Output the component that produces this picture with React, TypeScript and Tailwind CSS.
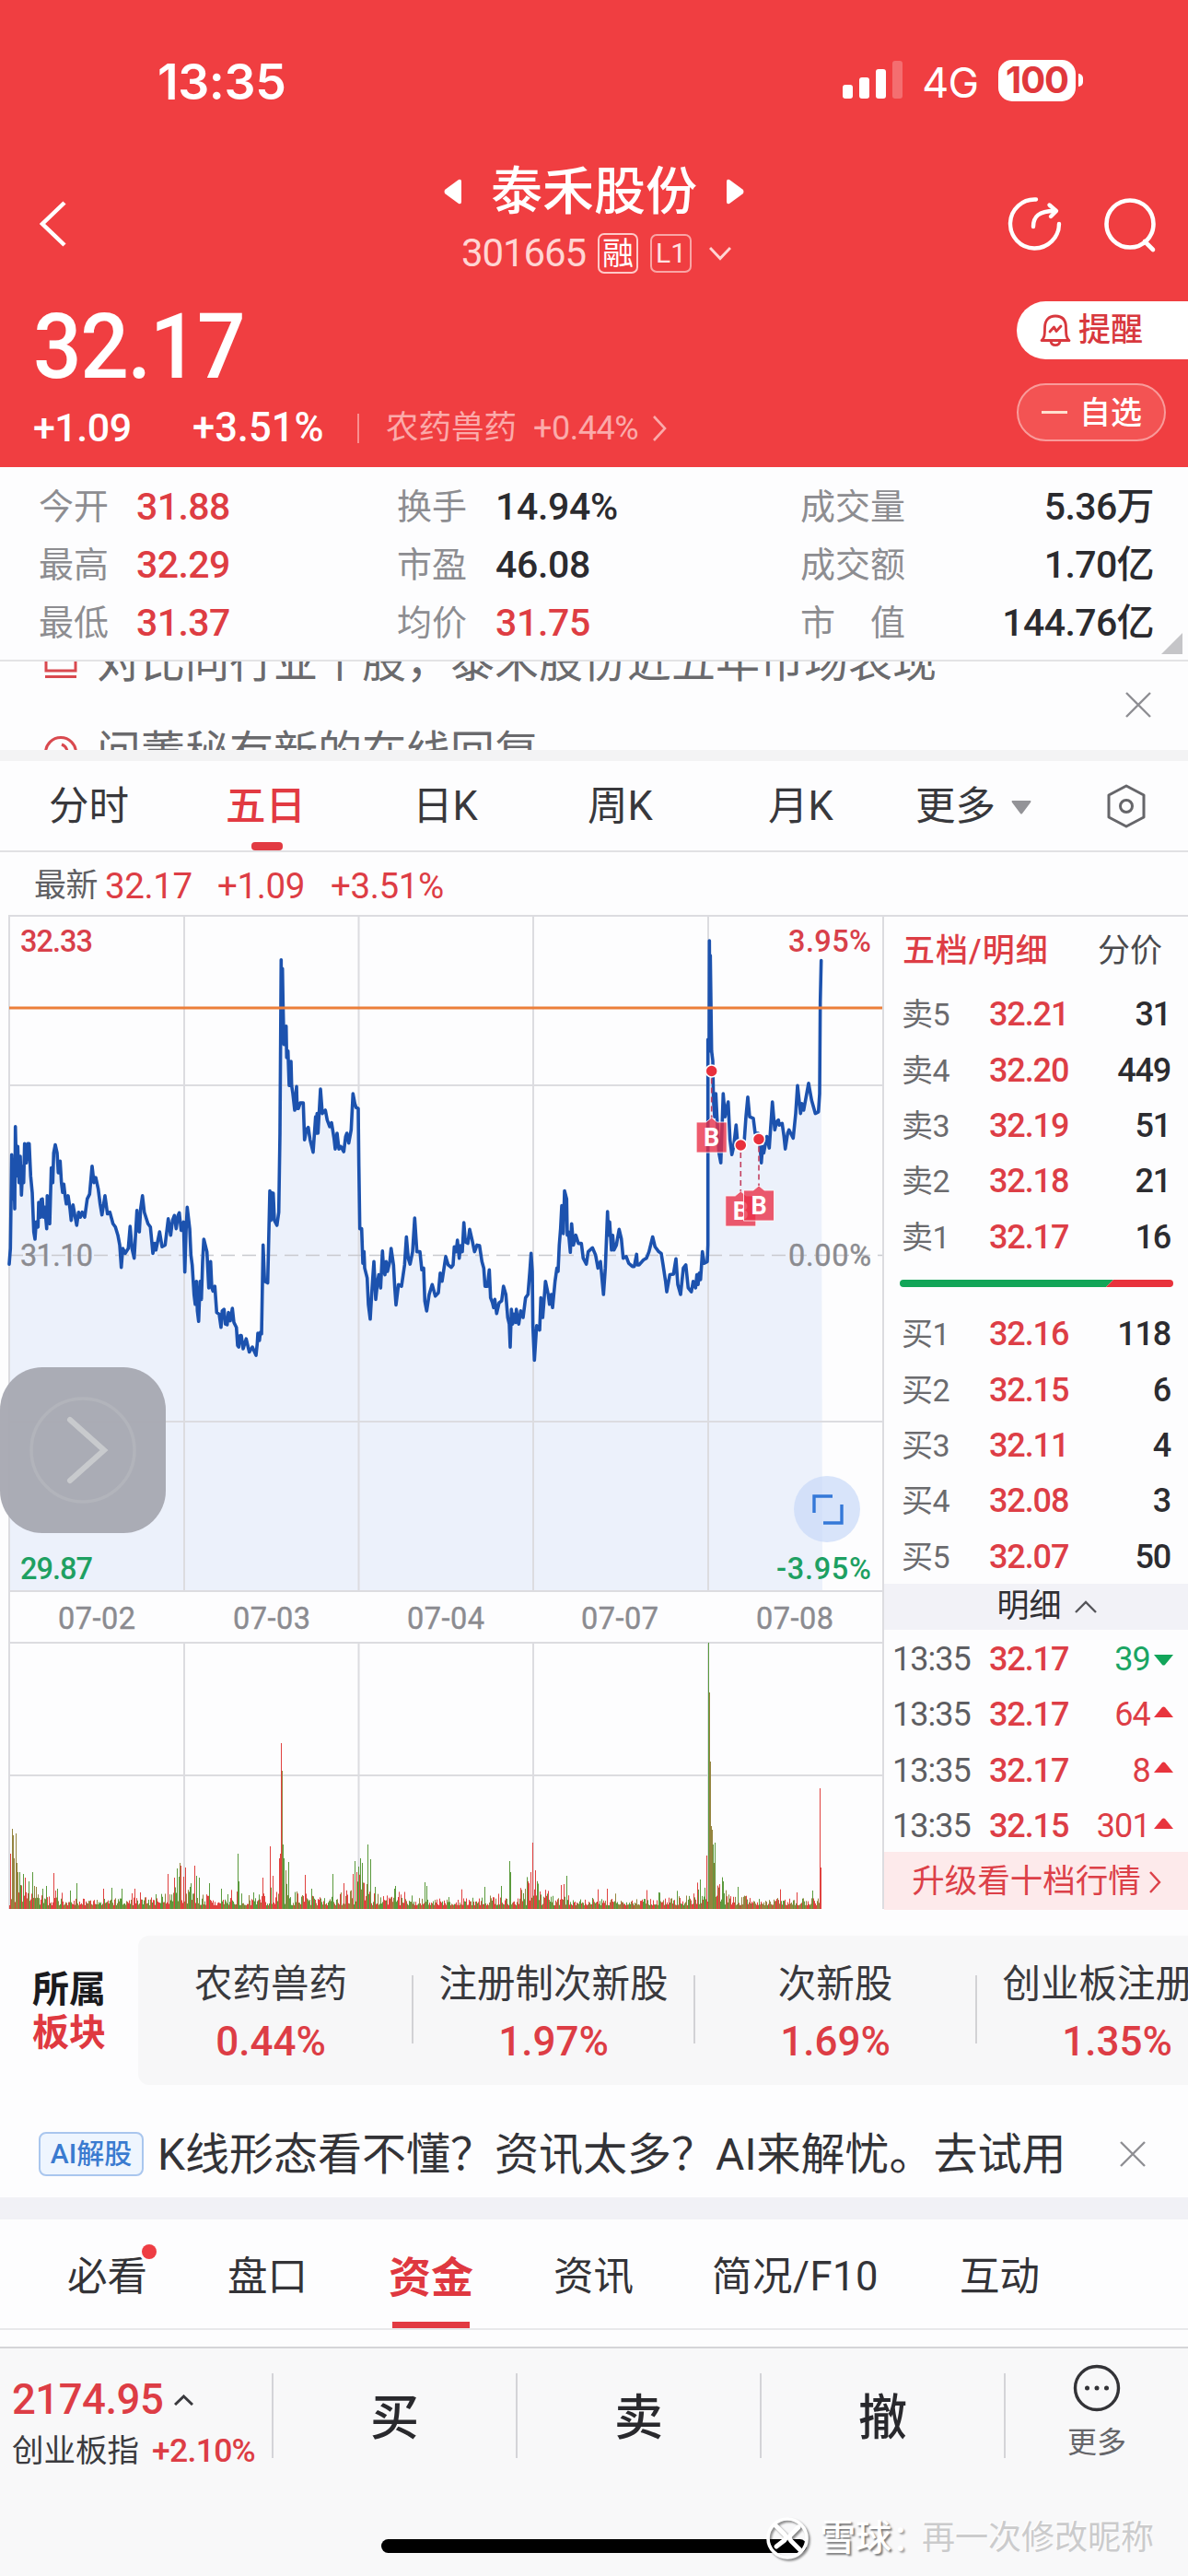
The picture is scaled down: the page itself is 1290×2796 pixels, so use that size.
import React from 'react';
import clsx from 'clsx';

const stats = [
  [
    { label: '今开', value: '31.88', up: true },
    { label: '最高', value: '32.29', up: true },
    { label: '最低', value: '31.37', up: true },
  ],
  [
    { label: '换手', value: '14.94%' },
    { label: '市盈', value: '46.08' },
    { label: '均价', value: '31.75', up: true },
  ],
  [
    { label: '成交量', value: '5.36万' },
    { label: '成交额', value: '1.70亿' },
    { label: '市　值', value: '144.76亿' },
  ],
];

const asks = [
  ['卖5', '32.21', '31'],
  ['卖4', '32.20', '449'],
  ['卖3', '32.19', '51'],
  ['卖2', '32.18', '21'],
  ['卖1', '32.17', '16'],
];

const bids = [
  ['买1', '32.16', '118'],
  ['买2', '32.15', '6'],
  ['买3', '32.11', '4'],
  ['买4', '32.08', '3'],
  ['买5', '32.07', '50'],
];

const trades = [
  { time: '13:35', price: '32.17', qty: '39', up: false },
  { time: '13:35', price: '32.17', qty: '64', up: true },
  { time: '13:35', price: '32.17', qty: '8', up: true },
  { time: '13:35', price: '32.15', qty: '301', up: true },
];

const sectors = [
  { name: '农药兽药', value: '0.44%' },
  { name: '注册制次新股', value: '1.97%' },
  { name: '次新股', value: '1.69%' },
  { name: '创业板注册制', value: '1.35%' },
];

// price trace, first half and second half of the five days; units are 1/3 px wide and 1/2.8 px high
const traceA =
  '30,1098 34,1050 38,765 42,900 45,780 48,930 50,680 54,830 58,740 62,850 66,770 70,888 74,800 77,850 80,732 86,790 90,732 95,732 100,830 105,880 110,1000 114,1022 118,970 124,985 126,910 132,955 134,902 138,900 142,955 146,925 152,990 154,890 158,970 162,975 167,805 172,850 175,760 180,735 186,760 190,820 196,785 200,850 204,880 208,855 212,890 216,915 222,890 228,930 232,965 238,918 244,950 250,980 256,940 262,955 268,940 276,955 284,900 292,885 300,800 306,850 312,835 320,870 326,915 332,948 342,890 350,945 358,940 368,975 376,985 384,1010 390,1040 395,1108 400,1050 408,1065 418,1050 424,983 430,1050 437,1080 446,935 450,995 454,1000 458,930 464,890 470,940 482,975 490,985 494,1025 498,1065 504,1035 508,1055 520,1000 528,1045 538,1040 548,960 556,1010 562,965 568,950 574,990 580,950 584,942 590,995 598,970 602,1122 606,1000 610,925 618,990 622,1070 626,1100 632,1190 636,1220 640,1150 643,1240 647,1272 652,1150 656,1205 660,1090 664,1022 674,1060 680,1170 686,1090 690,1170 694,1180 700,1165 706,1245 714,1250 720,1290 724,1240 730,1235 734,1280 740,1282 744,1245 750,1270 757,1232 762,1275 770,1290 774,1345 778,1350 782,1315 786,1315 792,1355 802,1325 812,1365 822,1350 834,1375 838,1340 840,1308 845,1330 848,1305 852,1310 855,1150 857,1040 862,1150 872,1155 879,875 882,965 884,880 887,960 890,882 894,965 902,980 908,940 912,700 916,173 917,400 920,200 922,300 925,430 932,375 934,470 938,450 942,555 948,482 950,555 954,580 960,630 966,558 968,625 972,625 978,608 988,608 992,720 998,690 1004,682 1010,720 1020,758 1028,650 1030,700 1033,640 1036,700 1044,566 1050,640 1060,630 1066,660 1074,680 1080,668 1088,715 1092,748 1098,700 1104,748 1110,740 1120,756 1126,710 1130,700 1136,730 1144,690 1150,580 1156,610 1160,622 1167,625 1169,800 1172,990 1178,990 1182,1095 1186,1060 1188,1110 1196,1140 1200,1220 1206,1265 1212,1170 1218,1090 1224,1205 1230,1150 1234,1130 1240,1170 1246,1058 1250,1120 1254,1130 1258,1090 1262,1120 1270,1090 1274,1050 1282,1100 1286,1170 1290,1222 1298,1160 1308,1165 1318,1100 1324,1015 1330,1080 1336,1098 1344,1060 1351,958 1358,1060 1368,1060 1374,1115 1380,1110 1384,1210 1390,1240 1398,1190 1408,1160 1418,1195 1428,1185 1434,1125 1440,1150';
const traceB =
  '12,1075 20,1100 30,1108 36,1100 40,1045 46,1060 50,1025 56,1080 60,1042 66,1060 71,972 76,1030 84,1035 90,992 98,1025 106,1060 114,1040 122,1042 130,1090 136,1110 140,1165 148,1165 154,1115 158,1200 164,1215 168,1230 172,1205 178,1248 186,1215 194,1210 200,1165 208,1190 214,1260 219,1280 222,1350 226,1235 230,1280 234,1250 240,1275 242,1235 246,1270 250,1280 256,1240 264,1260 272,1200 280,1190 286,1120 290,1065 294,1120 296,1290 301,1390 308,1285 318,1298 322,1200 328,1260 332,1210 337,1150 346,1190 350,1220 356,1190 360,1230 368,1150 374,1110 378,1120 382,1040 386,990 390,920 395,1005 399,875 406,900 408,1010 412,1000 418,1062 422,975 428,1040 436,1010 444,1035 454,1035 460,1080 470,1098 476,1060 490,1048 500,1070 508,1110 516,1090 526,1190 532,1110 539,938 542,1010 546,970 552,1055 556,1010 560,1055 568,1040 577,992 584,1020 590,1080 600,1075 608,1095 620,1105 626,1105 634,1068 636,1100 642,1100 656,1085 666,1080 674,1060 686,1015 694,1045 706,1060 714,1065 720,1100 728,1150 732,1182 742,1130 754,1128 762,1082 768,1160 777,1190 786,1110 794,1100 802,1170 812,1182 818,1150 826,1170 830,1130 834,1160 838,1125 842,1145 848,1060 854,1095 864,1090 866,1040 866,415 870,450 871,115 873,450 874,160 878,450 882,480 884,600 888,650 892,580 896,660 902,760 908,790 916,580 922,650 928,620 932,605 938,720 944,765 950,740 958,675 962,720 972,740 984,730 990,650 996,590 1002,650 1014,655 1020,700 1030,700 1036,740 1040,790 1044,740 1048,760 1058,710 1066,745 1076,605 1084,690 1090,665 1096,660 1098,675 1108,670 1114,710 1118,748 1126,700 1130,690 1144,715 1152,640 1158,555 1168,640 1172,610 1178,630 1194,548 1204,600 1216,640 1226,635 1230,580 1232,300 1235,175';

const trace = [
  ...traceA.split(' ').map((p) => p.split(',').map(Number)),
  ...traceB.split(' ').map((p) => p.split(',').map(Number)).map(([x, y]) => [x + 1440, y]),
].map(([x, y]) => [x / 3, y / 2.8 - 13]);

const line = 'M' + trace.map(([x, y]) => `${x.toFixed(1)} ${y.toFixed(1)}`).join('L');
const area = `${line}L893 734L10 734Z`;

const RED = '#e0413f';
const GREEN = '#5a9a3c';
const OLIVE = '#94843f';

const spikes: [number, number, string][] = [
  [11, 60, RED], [13, 87, OLIVE], [14, 80, OLIVE], [15, 55, OLIVE], [17, 82, OLIVE], [18, 50, OLIVE], [19, 40, OLIVE], [21, 40, GREEN], [25, 38, GREEN], [27, 34, RED], [31, 30, GREEN], [35, 40, GREEN],
  [37, 25, OLIVE], [39, 24, OLIVE], [46, 22, GREEN], [50, 25, GREEN], [58, 39, RED], [60, 20, RED], [62, 22, GREEN], [76, 20, GREEN], [83, 28, GREEN], [112, 22, RED], [121, 23, GREEN],
  [132, 22, GREEN], [146, 22, RED], [152, 18, RED], [169, 16, GREEN], [182, 38, RED], [189, 34, RED], [192, 44, GREEN], [195, 50, OLIVE], [196, 47, RED], [199, 35, RED], [201, 45, RED], [206, 24, GREEN],
  [211, 47, RED], [213, 36, GREEN], [216, 34, GREEN], [227, 28, GREEN], [240, 22, GREEN], [247, 16, GREEN], [258, 60, GREEN], [259, 30, GREEN], [275, 18, GREEN], [285, 34, RED], [293, 68, RED], [296, 36, RED],
  [303, 55, RED], [304, 60, RED], [305, 180, RED], [306, 150, OLIVE], [307, 70, GREEN], [308, 55, GREEN], [310, 42, OLIVE], [313, 51, GREEN],
  [331, 37, RED], [338, 22, GREEN], [361, 38, GREEN], [373, 28, RED], [383, 38, RED], [385, 52, GREEN], [387, 40, RED], [389, 46, GREEN], [391, 55, GREEN], [393, 50, GREEN], [399, 70, GREEN],
  [402, 54, GREEN], [407, 24, GREEN], [429, 25, GREEN], [461, 29, GREEN], [463, 25, GREEN], [526, 24, GREEN], [544, 25, GREEN], [553, 52, GREEN], [554, 40, GREEN], [573, 30, RED],
  [576, 40, RED], [578, 72, RED], [581, 42, RED], [609, 26, RED], [612, 27, RED], [615, 36, GREEN], [659, 22, RED], [715, 18, GREEN], [760, 32, GREEN],
  [767, 58, RED], [769, 289, GREEN], [770, 235, OLIVE], [771, 160, OLIVE], [772, 90, OLIVE], [773, 86, OLIVE], [774, 70, GREEN], [775, 50, OLIVE], [776, 72, GREEN], [785, 30, GREEN], [801, 24, GREEN],
  [865, 18, RED], [882, 20, GREEN], [890, 131, RED], [891, 45, RED],
];

// trading gets busier around each open and close
const busy = [14, 200, 307, 390, 578, 774];
let seed = 71;
const rand = () => {
  seed = (seed * 16807) % 2147483647;
  return seed / 2147483647;
};
const volumes: [number, number, string][] = [];
for (let x = 10; x < 892; x += 1) {
  const near = Math.min(...busy.map((b) => Math.abs(x - b)));
  const level = 8 + 30 * Math.exp(-near / 14);
  const h = 4 + level * Math.pow(rand(), 1.5) + (rand() > 0.93 ? 14 * rand() : 0);
  const r = rand();
  volumes.push([x, h, r > 0.58 ? RED : r > 0.3 ? GREEN : OLIVE]);
}

const Marker = ({ x, y, dotY }: { x: number; y: number; dotY: number }) => (
  <g>
    <path d={`M${x} ${dotY + 8}V${y - 4}`} stroke="#c2405f" strokeWidth="1.6" strokeDasharray="6 4" />
    <path
      d={`M${x - 16.5} ${y}H${x - 6}L${x} ${y - 5}L${x + 6} ${y}H${x + 16.5}V${y + 33}H${x - 16.5}Z`}
      fill="#e92d45"
      fillOpacity="0.78"
      stroke="#fff"
      strokeOpacity="0.8"
      strokeWidth="1"
    />
    <text x={x} y={y + 26} textAnchor="middle" fontSize="27" fontWeight="700" fill="#fff">
      B
    </text>
    <circle cx={x} cy={dotY} r="6.5" fill="#e9303c" stroke="#fff" strokeWidth="1.5" />
  </g>
);

const Chart = () => (
  <svg width="960" height="1080" viewBox="0 0 960 1080" fill="none" className="block shrink-0">
    <path d={area} fill="#ecf1fb" />
    <g stroke="#dcdce0" strokeWidth="2">
      <path d="M10 1H960M10 185H958M10 550H958M10 734H960M10 790H960M10 934H958" />
      <path d="M10 0V1079M959 0V1079M200 0V734M389.5 0V734M579 0V734M769 0V734M200 790V1079M389.5 790V1079M579 790V1079M769 790V1079" />
    </g>
    <path d="M10 369.5H958" stroke="#c9cacf" strokeWidth="1.6" strokeDasharray="15 8" />
    <path d={line} stroke="#1c52ae" strokeWidth="3.6" strokeLinejoin="round" strokeLinecap="round" />
    <path d="M10 101H958" stroke="#ec7f3a" strokeWidth="3" />

    {[...volumes, ...spikes].map(([x, h, color], i) => (
      <path key={i} d={`M${x + 0.5} 1079V${(1079 - h).toFixed(1)}`} stroke={color} strokeWidth="1" />
    ))}

    <g fontSize="32.5" fontWeight="500" fill="#d8404a">
      <text x="22" y="39.5" textLength="79">32.33</text>
      <text x="856" y="39.5" textLength="90">3.95%</text>
    </g>
    <g fontSize="32.5" fill="#8b8b90" stroke="#8b8b90" strokeWidth="0.4">
      <text x="22" y="380.5" textLength="79">31.10</text>
      <text x="856" y="380.5" textLength="90">0.00%</text>
      <text x="63" y="775" textLength="84">07-02</text>
      <text x="253" y="775" textLength="84">07-03</text>
      <text x="442" y="775" textLength="84">07-04</text>
      <text x="631" y="775" textLength="84">07-07</text>
      <text x="821" y="775" textLength="84">07-08</text>
    </g>
    <g fontSize="32.5" fontWeight="500" fill="#1ea062">
      <text x="22" y="720.5" textLength="79">29.87</text>
      <text x="843" y="720.5" textLength="103">-3.95%</text>
    </g>

    <Marker x={772.7} y={225} dotY={169.5} />
    <Marker x={804.3} y={305} dotY={250} />
    <Marker x={824} y={299} dotY={243.5} />

    <circle cx="898" cy="645" r="36" fill="#c9daf8" fillOpacity="0.72" />
    <path d="M884 649V631H904M914 640V660H894" stroke="#3478d8" strokeWidth="3.4" />
  </svg>
);

const CloseIcon = () => (
  <svg width="28" height="28" viewBox="0 0 28 28" fill="none" stroke="#8e8e93" strokeWidth="2.4">
    <path d="M1 1L27 27M27 1L1 27" />
  </svg>
);

const OrderRow = ({ row }: { row: string[] }) => (
  <div className="flex h-[60.4px] items-center pt-[4px] pl-[19px] pr-[20px] text-[36px]">
    <span className="w-[95px] text-[34px] tracking-[-0.5px] text-[#6b6b6e]">{row[0]}</span>
    <span className="font-medium tracking-[-1.1px] text-[#dd3e46]">{row[1]}</span>
    <span className="ml-auto font-medium tracking-[-1.2px] text-[#2c2c30]">{row[2]}</span>
  </div>
);

const Header = () => (
  <header className="h-[507px] bg-[#f03e41] text-white">
    <div className="flex h-[174px] items-center pl-[171px] pr-[114px] font-['Inter','Noto_Sans_CJK_SC',sans-serif]">
      <span className="pt-[3px] text-[53.5px] font-semibold tracking-[-0.4px]">13:35</span>
      <svg className="ml-auto" width="66" height="42" viewBox="0 0 66 42" fill="#fff">
        <rect x="0" y="26" width="11" height="15" rx="3" />
        <rect x="18" y="18" width="11" height="23" rx="3" />
        <rect x="36" y="9" width="11" height="32" rx="3" />
        <rect x="54" y="0" width="11" height="41" rx="3" opacity="0.25" />
      </svg>
      <span className="ml-[20px] pt-[4px] text-[45px] tracking-[-1px]">4G</span>
      <div className="ml-[22px] flex h-[45px] w-[84px] items-center justify-center rounded-[15px] bg-white text-[40px] font-bold tracking-[-1px] text-[#e0383c]">
        100
      </div>
      <div className="ml-[3px] h-[14px] w-[5px] rounded-r-full bg-white" />
    </div>

    <div className="flex h-[138px] items-center pl-[43px] pr-[33px]">
      <svg width="140" height="50" viewBox="0 0 140 50" fill="none" stroke="#fff" strokeWidth="4.5">
        <path d="M27 2L3 25L27 48" />
      </svg>
      <div className="flex h-full grow flex-col items-center pt-[3px] pl-[16px]">
        <div className="flex h-[64px] items-center gap-[31px]">
          <svg width="20" height="28" viewBox="0 0 20 28" fill="#fff">
            <path d="M1 12Q0 14 1 16L16 27Q19 28 19 25V3Q19 0 16 1Z" />
          </svg>
          <h1 className="text-[56px] font-medium">泰禾股份</h1>
          <svg width="20" height="28" viewBox="0 0 20 28" fill="#fff">
            <path d="M19 12Q20 14 19 16L4 27Q1 28 1 25V3Q1 0 4 1Z" />
          </svg>
        </div>
        <div className="flex h-[76px] items-center pl-[5px]">
          <span className="text-[42px] tracking-[-1.1px] text-[#ffd5d3]">301665</span>
          <span className="ml-[13px] flex h-[44px] w-[44px] items-center justify-center rounded-[7px] border-2 border-[#ffc9c8] text-[34px]">融</span>
          <span className="ml-[13px] flex h-[42px] w-[45px] items-center justify-center rounded-[7px] border-2 border-[#f9a5a5] text-[30px] text-[#ffe3e2]">L1</span>
          <svg className="ml-[19px]" width="24" height="16" viewBox="0 0 24 16" fill="none" stroke="#ffd5d3" strokeWidth="3">
            <path d="M1 2L12 13.500L23 2" />
          </svg>
        </div>
      </div>
      <div className="flex gap-[38px]">
        <svg width="64" height="64" viewBox="0 0 64 64" fill="none" stroke="#fff" strokeWidth="4.4" strokeLinecap="round">
          <path d="M34 5.500A26.500 26.500 0 1 0 59 32" />
          <path d="M31 35C31 24 37 18 54 18" />
          <path d="M48.500 11.500L56 18L50 24" strokeLinejoin="round" />
        </svg>
        <svg width="64" height="64" viewBox="0 0 64 64" fill="none" stroke="#fff" strokeWidth="4.600" strokeLinecap="round">
          <circle cx="34" cy="32" r="25.500" />
          <path d="M50 51L59 60" />
        </svg>
      </div>
    </div>

    <div className="flex h-[195px] justify-between">
      <div className="pl-[36px]">
        <div className="flex h-[126px] w-[260px] origin-left scale-x-[0.945] items-center pt-[4px] text-[98px] font-medium tracking-[-1.5px]">32.17</div>
        <div className="flex h-[50px] items-center pt-[3px]">
          <span className="w-[173px] text-[43px] font-medium tracking-[-0.5px]">+1.09</span>
          <span className="w-[179px] text-[43.5px] font-medium">+3.51%</span>
          <div className="h-[32px] w-[2px] bg-[#f98f90]" />
          <span className="ml-[29px] text-[35.5px] text-[#fbaaaa]">农药兽药</span>
          <span className="ml-[18px] text-[36px] tracking-[-0.5px] text-[#fbaaaa]">+0.44%</span>
          <svg className="ml-[15px]" width="16" height="28" viewBox="0 0 16 28" fill="none" stroke="#fbaaaa" strokeWidth="2.6">
            <path d="M2 1L14 14L2 27" />
          </svg>
        </div>
      </div>
      <div className="flex w-[186px] flex-col gap-[26px] pt-[15px]">
        <div className="flex h-[63px] items-center rounded-l-full bg-white pl-[25px] text-[35px] font-medium text-[#d8383e]">
          <svg className="mr-[8px]" width="34" height="36" viewBox="0 0 34 36" fill="none" stroke="#d8383e" strokeWidth="2.8" strokeLinejoin="round" strokeLinecap="round">
            <path d="M2 28.500C5 26 5.500 23 5.500 15C5.500 6 10 2 17 2S28.500 6 28.500 15C28.500 23 29 26 32 28.500Z" />
            <path d="M12 29.500C13 35 21 35 22 29.500" />
            <path d="M11 19L15.500 14L18 18.500L23 13" />
          </svg>
          提醒
        </div>
        <div className="flex h-[63px] w-[162px] items-center rounded-full border-2 border-[#f99b9a] bg-[#f35353] pl-[25px] text-[34px] font-medium">
          <div className="mr-[13px] h-[3px] w-[28px] bg-[#ffe0cf]" />
          自选
        </div>
      </div>
    </div>
  </header>
);

const Stats = () => (
  <section className="relative flex h-[211px] border-b-2 border-[#e3e3e5] pt-[12px] text-[41px]">
    {stats.map((col, c) => (
      <div key={c} className={clsx('flex flex-col', c === 0 && 'w-[431px] pl-[42px]', c === 1 && 'w-[438px]', c === 2 && 'grow pr-[37px]')}>
        {col.map((s) => (
          <div key={s.label} className="flex h-[63px] items-center">
            <span className={clsx('pb-[2px] text-[38px] text-[#8d8d91]', c === 0 && 'w-[106px]', c === 1 && 'w-[107px]')}>{s.label}</span>
            <span className={clsx('font-medium', c === 1 ? 'tracking-[-0.3px]' : 'tracking-[-0.6px]', c === 2 && 'ml-auto', s.up ? 'text-[#de3d43]' : 'text-[#2b2b2f]')}>{s.value}</span>
          </div>
        ))}
      </div>
    ))}
    <svg className="absolute right-[6px] bottom-[6px]" width="23" height="23" viewBox="0 0 23 23" fill="#c5c5c8">
      <path d="M23 0V23H0Z" />
    </svg>
  </section>
);

const News = () => (
  <section className="flex h-[96px] justify-between overflow-hidden pl-[47px] pr-[40px] text-[48px] leading-[48px] text-[#6a6a6d]">
    <div className="-mt-[23px] whitespace-nowrap">
      <div className="flex h-[48px] items-center">
        <svg className="mr-[20px] shrink-0" width="38" height="40" viewBox="0 0 38 40" fill="none" stroke="#d9494f" strokeWidth="3">
          <path d="M3 4V29H35V4M2 35.500H36" />
        </svg>
        对比同行业个股，泰禾股份近五年市场表现
      </div>
      <div className="mt-[50px] flex h-[48px] items-center">
        <svg className="mr-[20px] shrink-0" width="38" height="38" viewBox="0 0 38 38" fill="none" stroke="#d9494f" strokeWidth="3">
          <circle cx="19" cy="19" r="16.500" />
          <path d="M20 10Q25 12 26 17" />
        </svg>
        问董秘有新的在线回复
      </div>
    </div>
    <div className="pt-[33px]">
      <CloseIcon />
    </div>
  </section>
);

const PeriodTabs = () => (
  <nav className="flex h-[99px] border-b-2 border-[#e1e1e4] pl-[53px] text-[43.5px] text-[#38383c]">
    <span className="flex w-[192px] items-center pt-[3px]">分时</span>
    <div className="relative flex w-[203px] items-center pt-[3px] font-medium text-[#e23a42]">
      五日
      <div className="absolute bottom-0 left-[28px] h-[9px] w-[34px] rounded-[4px] bg-[#e23a42]" />
    </div>
    <span className="flex w-[190px] items-center pt-[3px]">日K</span>
    <span className="flex w-[196px] items-center pt-[3px]">周K</span>
    <span className="flex w-[160px] items-center pt-[3px]">月K</span>
    <span className="flex items-center pt-[3px]">
      更多
      <svg className="ml-[17px]" width="22" height="15" viewBox="0 0 22 15" fill="#939397">
        <path d="M1 0H21Q22 1 21 2L12 14Q11 15 10 14L1 2Q0 1 1 0Z" />
      </svg>
    </span>
    <svg className="ml-[81px] self-center" width="44" height="48" viewBox="0 0 44 48" fill="none" stroke="#66666a" strokeWidth="3" strokeLinejoin="round">
      <path d="M22 2L41 12V36L22 46L3 36V12Z" />
      <circle cx="22" cy="24" r="6.500" />
    </svg>
  </nav>
);

const OrderBook = () => (
  <aside className="flex grow flex-col border-t-2 border-[#dcdce0] text-[36px]">
    <div className="flex h-[74px] items-center justify-between pl-[20px] pr-[29px] text-[34px]">
      <span className="text-[35px] font-medium tracking-[1px] text-[#dd3d45]">五档/明细</span>
      <span className="text-[35px] text-[#4a4a4e]">分价</span>
    </div>
    {asks.map((r) => (
      <OrderRow key={r[0]} row={r} />
    ))}
    <div className="flex h-[45px] items-center pl-[17px] pr-[17px]">
      <svg width="297" height="8" viewBox="0 0 297 8">
        <path d="M4 0H232L224 8H4Q0 8 0 4T4 0Z" fill="#12a558" />
        <path d="M232 0H293Q297 0 297 4T293 8H224Z" fill="#e8323c" />
      </svg>
    </div>
    {bids.map((r) => (
      <OrderRow key={r[0]} row={r} />
    ))}
    <div className="mt-px flex h-[50px] items-center justify-center gap-[14px] bg-[#f2f2f7] pl-[22px] text-[35px] text-[#2f2f33]">
      明细
      <svg width="24" height="14" viewBox="0 0 24 14" fill="none" stroke="#55555a" strokeWidth="2.4">
        <path d="M1 13L12 2L23 13" />
      </svg>
    </div>
    {trades.map((t, i) => (
      <div key={i} className="flex h-[60.4px] items-center pt-[4px] pl-[9px] pr-[17px]">
        <span className="w-[105px] tracking-[-1px] text-[#5e5e62]">{t.time}</span>
        <span className="font-medium tracking-[-1.1px] text-[#dd3e46]">{t.price}</span>
        <span className={clsx('ml-auto tracking-[-0.8px]', t.up ? 'text-[#dd3e46]' : 'text-[#1aa564]')}>{t.qty}</span>
        <svg className={clsx('ml-[4px]', t.up ? '-mt-[6px]' : 'mt-px')} width="21" height="13" viewBox="0 0 21 13" fill={t.up ? '#e8343d' : '#12a55a'}>
          {t.up ? <path d="M0 12L9 1Q10.500 0 12 1L21 12Z" /> : <path d="M0 1L9 12Q10.500 13 12 12L21 1Z" />}
        </svg>
      </div>
    ))}
    <div className="flex grow items-center justify-center gap-[9px] bg-[#fdeaeb] pt-[2px] text-[35.5px] text-[#dc4048]">
      升级看十档行情
      <svg width="13" height="24" viewBox="0 0 13 24" fill="none" stroke="#dc4048" strokeWidth="2.4">
        <path d="M1 1L11 12L1 23" />
      </svg>
    </div>
  </aside>
);

const Sectors = () => (
  <section className="mt-[28px] flex h-[162px] overflow-hidden">
    <div className="flex w-[150px] shrink-0 flex-col justify-center pt-px pl-[35px] text-[40px] leading-[47px] font-bold">
      <span className="text-[#1b1b1e]">所属</span>
      <span className="text-[#df3940]">板块</span>
    </div>
    <div className="flex shrink-0 items-center rounded-[12px] bg-[#f7f7f8]">
      {sectors.map((s, i) => (
        <React.Fragment key={s.name}>
          {i > 0 && <div className="-mt-[2px] h-[74px] w-[2px] shrink-0 bg-[#d2d2d5]" />}
          <div className={clsx('flex shrink-0 flex-col items-center pt-[6px]', i === 0 ? 'w-[297px] pr-[9px]' : 'w-[304px]')}>
            <span className="text-[41.5px] leading-[62px] whitespace-nowrap text-[#39393d]">{s.name}</span>
            <span className="text-[44px] leading-[62px] font-medium text-[#dd3d45]">{s.value}</span>
          </div>
        </React.Fragment>
      ))}
    </div>
  </section>
);

const InfoTabs = () => (
  <nav className="flex h-[120px] border-b-2 border-[#e8e8ea] pl-[73px] text-[43.5px] text-[#333337]">
    <div className="relative flex w-[174px] items-center pt-[7px]">
      必看
      <div className="absolute top-[27px] left-[81px] h-[16px] w-[16px] rounded-full bg-[#ee3d44]" />
    </div>
    <span className="flex w-[175px] items-center pt-[7px]">盘口</span>
    <div className="relative flex w-[179px] items-center pt-[7px] text-[46px] font-bold text-[#df3840]">
      资金
      <div className="absolute bottom-0 left-[4px] h-[7px] w-[84px] bg-[#e23a42]" />
    </div>
    <span className="flex w-[172px] items-center pt-[7px]">资讯</span>
    <span className="flex w-[269px] items-center pt-[7px] tracking-[0.5px]">简况/F10</span>
    <span className="flex items-center pt-[7px]">互动</span>
  </nav>
);

const BottomBar = () => (
  <footer className="relative flex grow flex-col border-t-2 border-[#d5d5d8] bg-[#f8f8f9] pt-[27px]">
    <div className="flex h-[92px]">
      <div className="flex w-[295px] flex-col pl-[13px]">
        <div className="flex h-[56px] shrink-0 items-center pt-[2px] text-[45.5px] font-medium tracking-[-0.5px] text-[#dd3d45]">
          2174.95
          <svg className="ml-[12px]" width="21" height="12" viewBox="0 0 21 12" fill="none" stroke="#3a3a3e" strokeWidth="3">
            <path d="M1 11L10.500 2L20 11" />
          </svg>
        </div>
        <div className="flex h-[52px] shrink-0 items-center pt-[5px] text-[34.5px] whitespace-nowrap text-[#3b3b3f]">
          创业板指
          <span className="ml-[14px] text-[35.5px] font-medium tracking-[-0.7px] text-[#dd3d45]">+2.10%</span>
        </div>
      </div>
      {['买', '卖', '撤'].map((t) => (
        <button key={t} className="w-[265px] border-l-2 border-[#d4d4d8] pt-[6px] text-[53px] font-medium text-[#29292d]">
          {t}
        </button>
      ))}
      <div className="flex grow flex-col items-center border-l-2 border-[#d4d4d8]">
        <svg className="-mt-[10px] shrink-0" width="52" height="52" viewBox="0 0 52 52" fill="none">
          <circle cx="26" cy="26" r="23.500" stroke="#333337" strokeWidth="3.400" />
          <path d="M15.500 26h.01M26 26h.01M36.500 26h.01" stroke="#333337" strokeWidth="5" strokeLinecap="round" />
        </svg>
        <span className="mt-[9px] text-[32px] leading-[48px] text-[#66666a]">更多</span>
      </div>
    </div>
    <div className="mt-[88px] h-[15px] w-[462px] self-center rounded-full bg-black" />

    {/* watermark over the home indicator */}
    <div className="absolute right-[37px] bottom-[13px] flex h-[56px] items-center text-white">
      <svg width="50" height="50" viewBox="0 0 50 50" fill="none" className="drop-shadow-[2px_2px_1px_rgba(0,0,0,0.45)]" stroke="#fff" strokeLinecap="round">
        <circle cx="25" cy="25" r="21" strokeWidth="3.600" />
        <path d="M12 11L22 21Q25 24 22 27L13 34" strokeWidth="5" />
        <path d="M37 13L28 22Q26 25 29 28L39 38" strokeWidth="5" />
      </svg>
      <span className="ml-[10px] text-[39px] font-medium [text-shadow:2px_2px_2px_rgba(0,0,0,0.5)]">雪球</span>
      <span className="w-[33px] text-[39px] [text-shadow:2px_2px_2px_rgba(0,0,0,0.35)]">：</span>
      <span className="text-[36px] text-[#cbcbcc] [text-shadow:-1px_-1px_0_#fff]">再一次修改昵称</span>
    </div>
  </footer>
);

export default function App() {
  return (
    <div className="flex h-[2796px] w-[1290px] flex-col overflow-hidden bg-[#fdfdfe] font-['Roboto','Noto_Sans_CJK_SC',sans-serif] leading-none">
      <Header />
      <Stats />
      <News />
      <div className="h-[12px] bg-[#f3f3f4]" />
      <PeriodTabs />

      <div className="flex h-[68px] items-center pt-[6px] pl-[37px] text-[38.5px] tracking-[-0.4px] text-[#dd3d45]">
        <span className="w-[77px] pb-[2px] text-[35px] text-[#5f5f63]">最新</span>
        <span className="w-[122px]">32.17</span>
        <span className="w-[123px]">+1.09</span>
        <span>+3.51%</span>
      </div>

      <div className="relative flex h-[1080px]">
        <Chart />
        <OrderBook />
        {/* floating assistive button */}
        <div className="absolute top-[491px] left-0 flex h-[180px] w-[180px] items-center justify-center rounded-[46px] bg-[#a6a8b1]/95">
          <svg width="120" height="120" viewBox="0 0 120 120" fill="none">
            <circle cx="60" cy="60" r="56" stroke="#b2b4bb" strokeWidth="3.500" />
            <path d="M46 27L83 60L46 93" stroke="#c8cacd" strokeWidth="6" strokeLinecap="round" />
          </svg>
        </div>
      </div>

      <Sectors />

      <section className="flex h-[122px] items-center pt-[27px] pr-[46px] pl-[42px]">
        <span className="flex h-[48px] w-[114px] items-center justify-center rounded-[8px] border-2 border-[#a9c6ee] bg-[#eef5fe] text-[30px] font-medium text-[#3a7bd0]">
          AI解股
        </span>
        <p className="ml-[15px] pt-[3px] text-[48px] whitespace-nowrap text-[#333337]">K线形态看不懂？资讯太多？AI来解忧。去试用</p>
        <div className="ml-auto">
          <CloseIcon />
        </div>
      </section>

      <div className="h-[24px] bg-[#f1f1f6]" />
      <InfoTabs />
      <div className="h-[18px]" />
      <BottomBar />
    </div>
  );
}
